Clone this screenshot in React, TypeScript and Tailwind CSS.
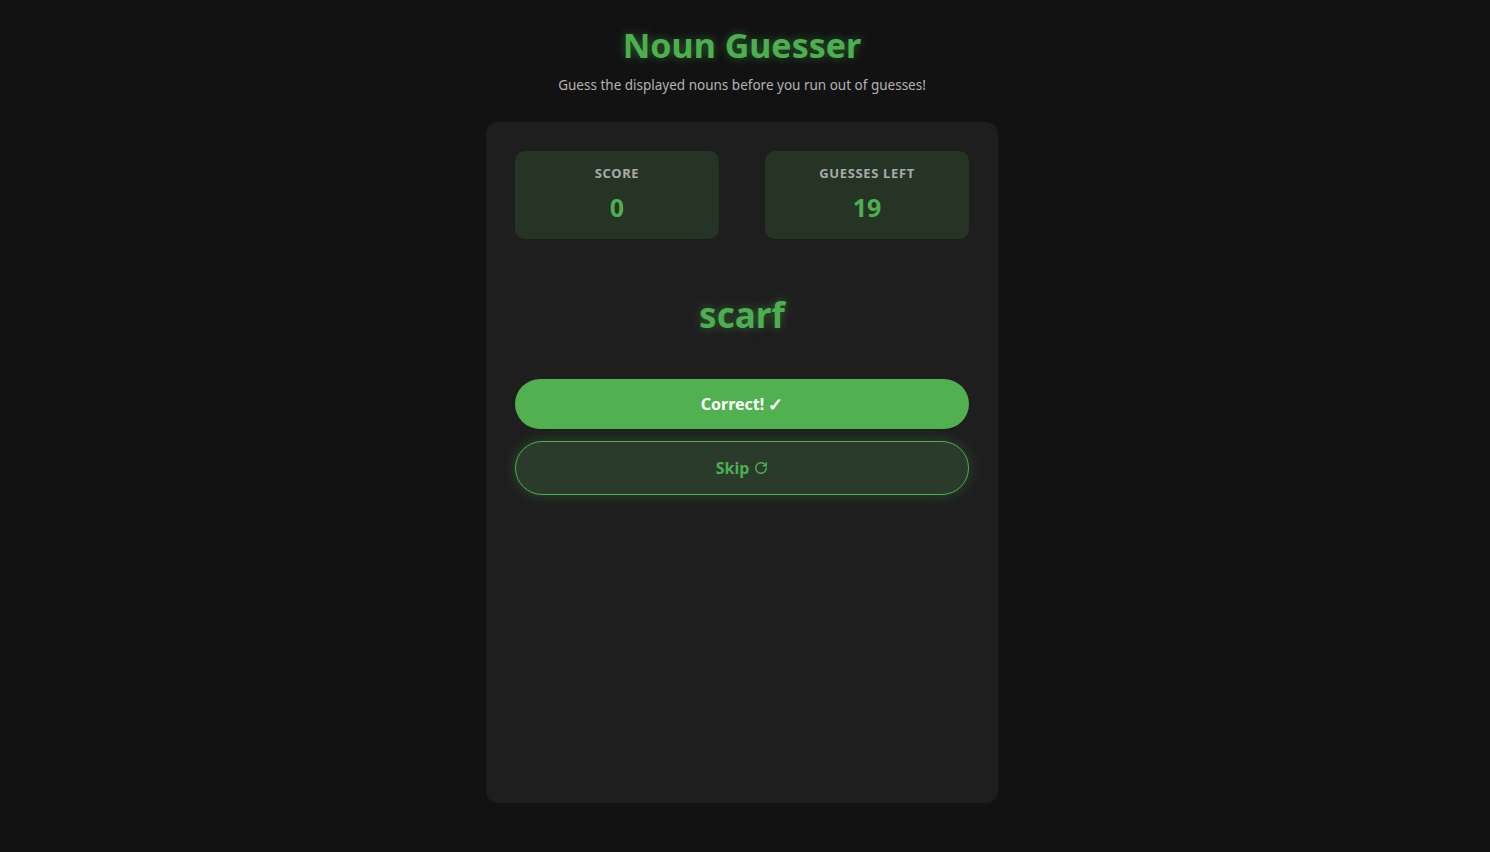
import { RotateCw } from 'lucide-react';

export default function App() {
  const score = 0;
  const guessesLeft = 19;
  const word = 'scarf';

  return (
    <div className="min-h-screen bg-[#121212] font-['Noto_Sans',sans-serif] flex flex-col items-center pt-[21px] pr-[6px]">
      <h1 className="text-[34px] leading-[48px] font-bold text-[#4caf50] [text-shadow:0_0_10px_rgba(76,175,80,0.5)]">
        Noun Guesser
      </h1>
      <p className="mt-[6px] text-[13.5px] leading-[20px] text-[#b3b3b3]">
        Guess the displayed nouns before you run out of guesses!
      </p>

      <div className="mt-[27px] w-[512px] h-[681px] bg-[#1e1e1e] rounded-[12px] p-[29px] flex flex-col">
        <div className="flex justify-between">
          <div className="w-[204px] h-[88px] rounded-[10px] bg-[#263426] flex flex-col items-center pt-[12px]">
            <span className="text-[13px] leading-[20px] font-bold tracking-[0.05em] text-[#aaaaaa] uppercase">Score</span>
            <span className="mt-[8px] text-[25px] leading-[32px] font-bold text-[#4caf50]">{score}</span>
          </div>
          <div className="w-[204px] h-[88px] rounded-[10px] bg-[#263426] flex flex-col items-center pt-[12px]">
            <span className="text-[13px] leading-[20px] font-bold tracking-[0.05em] text-[#aaaaaa] uppercase">Guesses Left</span>
            <span className="mt-[8px] text-[25px] leading-[32px] font-bold text-[#4caf50]">{guessesLeft}</span>
          </div>
        </div>

        <div className="mt-[52px] text-center text-[35px] leading-[48px] font-bold text-[#4caf50] [text-shadow:0_0_10px_rgba(76,175,80,0.5)]">
          {word}
        </div>

        <button className="mt-[40px] h-[50px] w-full rounded-full bg-[#51b151] text-white text-[16px] font-bold flex items-center justify-center gap-[4px]">
          <span>Correct!</span>
          <span className="text-[18px] leading-none">✓</span>
        </button>
        <button className="mt-[12px] h-[54px] w-full rounded-full bg-[#2b3b2b] border border-[#4caf50] text-[#4caf50] text-[16px] font-bold shadow-[0_0_14px_rgba(76,175,80,0.3)] flex items-center justify-center gap-[5px]">
          <span>Skip</span>
          <RotateCw size={14} strokeWidth={2.5} />
        </button>
      </div>
    </div>
  );
}
